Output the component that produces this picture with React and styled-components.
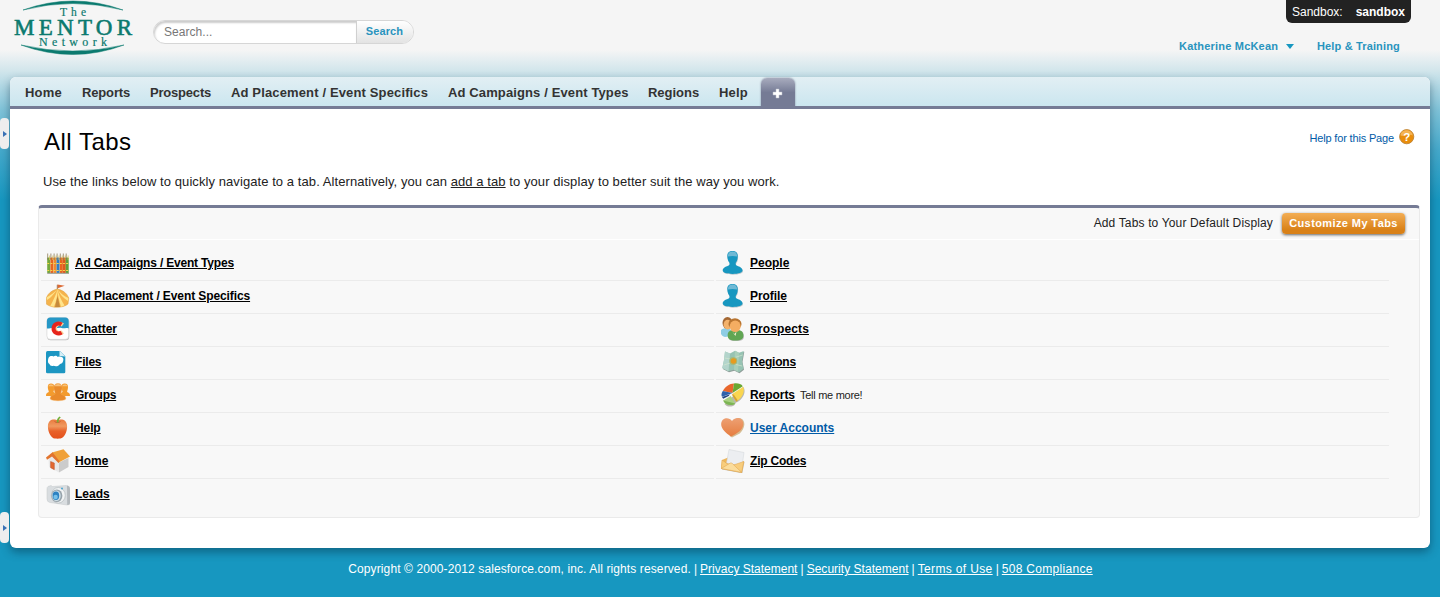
import React from "react";
import styled, { createGlobalStyle } from "styled-components";

const Global = createGlobalStyle`
  * { box-sizing: border-box; }
  body { margin: 0; font-family: "Liberation Sans", Arial, sans-serif; font-size: 12px; color: #222; background: #1797c0; }
  a { color: inherit; }
`;

const Page = styled.div`
  position: relative;
  height: 597px;
  overflow: hidden;
  background: linear-gradient(#f5f5f5 0, #f5f5f5 50px, #d3e6ec 70px, #7fc3d9 110px, #45a9cb 150px, #1797c0 200px);
`;

const Header = styled.header`
  display: flex;
  height: 77px;
  padding: 0 30px 0 11px;
`;

const Logo = styled.svg`
  width: 124px;
  height: 58px;
  flex: none;
`;

const SearchForm = styled.div`
  display: flex;
  width: 261px;
  height: 24px;
  margin: 20px 0 0 18px;
  border: 1px solid #d6d6d6;
  border-radius: 12px;
  overflow: hidden;
  background: #fff;
`;

const SearchField = styled.div`
  width: 202px;
  padding-left: 10px;
  line-height: 22px;
  color: #777;
  letter-spacing: 0.05px;
  border-radius: 12px 0 0 12px;
  box-shadow: inset 1px 2px 2px #ccc;
`;

const SearchButton = styled.button`
  flex: 1;
  padding: 0 1px 2px 0;
  border: 0;
  border-left: 1px solid #d0d0d0;
  font: bold 11px "Liberation Sans", Arial, sans-serif;
  letter-spacing: 0.1px;
  color: #2a94be;
  background: linear-gradient(#fff, #e3e3e3);
`;

const Account = styled.div`
  display: flex;
  margin: 39px 0 0 auto;
  line-height: 14px;
  font-size: 11px;
  font-weight: bold;
  color: #2a94be;
`;

const UserName = styled.span`
  width: 99px;
  letter-spacing: 0.2px;
  white-space: nowrap;
`;

const HelpLink = styled.span`
  width: 93px;
  margin-left: 23px;
  white-space: nowrap;
  letter-spacing: 0.15px;
`;

const Caret = styled.span`
  margin: 5px 0 0 8px;
  height: 0;
  border: 4px solid transparent;
  border-top: 5px solid #1797c0;
  border-bottom: 0;
`;

const SandboxBadge = styled.div`
  position: absolute;
  top: 0;
  right: 29px;
  display: flex;
  justify-content: space-between;
  width: 125px;
  height: 23px;
  padding: 0 6px;
  line-height: 24px;
  color: #fff;
  background: #222;
  border-radius: 0 0 6px 6px;
`;

const Sheet = styled.div`
  height: 471px;
  margin: 0 10px;
  background: #fff;
  border-radius: 6px;
  box-shadow: 0 4px 10px 0 rgba(0, 30, 50, 0.42);
`;

const TabBar = styled.nav`
  display: flex;
  height: 32px;
  padding: 0 5px;
  border-bottom: 3px solid #757b95;
  border-radius: 6px 6px 0 0;
  background: linear-gradient(#e2eff4, #cbe6ef);
`;

const Tab = styled.span`
  width: ${(p) => p.$w}px;
  padding-left: 10px;
  line-height: 31px;
  font-size: 13px;
  font-weight: bold;
  color: #333;
  white-space: nowrap;
  letter-spacing: ${(p) => p.$track}px;
`;

const PlusTab = styled.span`
  display: flex;
  justify-content: center;
  width: 34px;
  height: 29px;
  margin: 1px 0 0 -2px;
  padding: 10px 1px 0 0;
  border-radius: 6px 6px 0 0;
  background: linear-gradient(#a8acbe, #757b95 50%);
  box-shadow: 0 0 2px #777e95;
`;

const Content = styled.main`
  padding: 0 10px 0 28px;
`;

const TitleRow = styled.div`
  display: flex;
  justify-content: space-between;
  height: 57px;
  padding: 17px 5px 0 6px;
`;

const Title = styled.h1`
  margin: 0;
  font-size: 24px;
  line-height: 32px;
  font-weight: normal;
  letter-spacing: 0.5px;
  color: #000;
`;

const PageHelp = styled.div`
  display: flex;
  height: 24px;
  gap: 5px;
  font-size: 11px;
  line-height: 25px;
  letter-spacing: -0.16px;
  color: #015ba7;
`;

const Intro = styled.p`
  margin: 0;
  height: 39px;
  padding-left: 5px;
  font-size: 13px;
  line-height: 31px;
  letter-spacing: 0.075px;
`;

const Block = styled.section`
  height: 313px;
  border: 1px solid #eaeaea;
  border-top: 3px solid #757b95;
  border-radius: 4px;
  background: #f8f8f8;
`;

const BlockHeader = styled.div`
  display: flex;
  justify-content: flex-end;
  height: 32px;
  padding: 5px 14px 0 0;
  border-bottom: 1px solid #fff;
  line-height: 20px;
  letter-spacing: 0.15px;
`;

const CustomizeButton = styled.button`
  width: 123px;
  height: 21px;
  margin-left: 9px;
  padding: 0 0 1px;
  border: 0;
  border-radius: 4px;
  color: #fff;
  font: bold 11px "Liberation Sans", Arial, sans-serif;
  letter-spacing: 0.4px;
  white-space: nowrap;
  background: linear-gradient(#f3ae55, #d98118 80%);
  box-shadow: 0 1px 3px rgba(0, 0, 0, 0.6);
`;

const Lists = styled.div`
  display: grid;
  grid-template-columns: 673px 673px;
  column-gap: 2px;
  padding: 8px 0 0 2px;
`;

const Row = styled.div`
  display: flex;
  height: 33px;
  padding: 3px 0 0 5px;
  border-bottom: 1px solid ${(p) => (p.$last ? "transparent" : "#ebebeb")};
  line-height: 24px;
`;

const TabLink = styled.a`
  margin-left: 5px;
  font-weight: bold;
  color: ${(p) => (p.$blue ? "#015ba7" : "#000")};
  letter-spacing: ${(p) => p.$track}px;
  text-decoration: underline;
`;

const Note = styled.span`
  margin-left: 5px;
  font-size: 11px;
  line-height: 25px;
  letter-spacing: -0.28px;
`;

const Icon = styled.svg`
  width: 24px;
  height: 24px;
  flex: none;
`;

const Handle = styled.span`
  position: absolute;
  left: 0;
  top: ${(p) => p.$top}px;
  width: 9px;
  height: 31px;
  padding: 13px 0 0 3px;
  border-radius: 4px;
  background: #eee;
  &::after {
    content: "";
    display: block;
    width: 0;
    border: 3px solid transparent;
    border-left: 4px solid #3971b5;
    border-right: 0;
  }
`;

const Footer = styled.footer`
  padding: 14px 0 0 1px;
  text-align: center;
  line-height: 14px;
  color: #fff;
  word-spacing: -0.3px;
`;

const FooterText = styled.span`
  letter-spacing: ${(p) => p.$track}px;
  word-spacing: 0;
  text-decoration: ${(p) => (p.$link ? "underline" : "none")};
`;

const personPath = "M6.300 5C6.300 1.500 8 0 11.500 0s5.200 1.500 5.200 5c0 3-.5 4.600-1.500 6-.8 1.200-.8 2.800.3 3.500 1.500 1 6 1.600 6 5 0 2-4 3.400-9.900 3.400S1.700 21.500 1.700 19.500c0-3.400 4.500-4 6-5 1.100-.7 1.100-2.300.3-3.500-1-1.400-1.700-3-1.700-6z";

const Person = () => (
  <g>
    <path d={personPath} fill="#b9c6cb" transform="translate(.4 .8)" />
    <path d={personPath} fill="#1797c0" />
    <path d="M6.900 5.500c0-3.500 1.500-5 4.600-5s4.600 1.500 4.600 5c-2.500-.8-6.500-.8-9.200 0z" fill="#6fb9d5" />
  </g>
);

const icons = {
  books: (
    <g>
      <path d="M1 21h22v2H2z" fill="#c9c9c9" />
      {[["#74a83c", 1.2], ["#e8641e", 4.4], ["#f08a2c", 7.6], ["#2f7fc6", 10.600], ["#e8641e", 13.800], ["#e05a1c", 16.800], ["#5fa13b", 19.700]].map(([c, x]) => (
        <g key={x}>
          <rect x={x} y="6.500" width="3" height="15.500" rx=".8" fill={c} />
          <path d={`M${x + 0.5} 9v-6.500`} stroke="#8d7c58" strokeWidth=".8" />
          <path d={`M${x + 2.4} 9v-4.500`} stroke="#d8c15a" strokeWidth=".8" />
        </g>
      ))}
      <path d="M1.200 12.500h21.500M1.200 19.500h21.500" stroke="#f6d34a" strokeWidth="1" strokeDasharray="2 1.150" />
      <path d="M1 22.300h22" stroke="#8f8f80" strokeWidth=".7" />
    </g>
  ),
  tent: (
    <g>
      <path d="M11.300 6V.8" stroke="#8a6a4a" strokeWidth=".9" />
      <path d="M11.500.5l7.200 1.300-7 2.400z" fill="#dc6a35" />
      <path d="M11.500 5c4 .8 7.500 3 9.300 5.500l2 3.500-.8 6c-5 4.300-16 4.500-21.500.2L.200 14l2-3.500C4 8 7.500 5.800 11.500 5z" fill="#f5b34c" stroke="#dda040" strokeWidth=".5" />
      <path d="M11.500 5c.2 6-1 12-3.500 17.700l-3.700-.8C7.500 16 10.500 10 11.500 5zM11.500 5c.8 5 3.500 11 7 16.500l-3.500 1.200C13 17 11.800 11 11.500 5zM11.500 5C8.500 9 5 14 1 16l-.5-2.500C5 11 9 8 11.500 5zm0 0c2.500 4 6 7 10.800 9l-.2 3C17 14 13.500 10 11.500 5z" fill="#ffe48c" />
      <path d="M11.500 12l2.500 11h-5z" fill="#c58a3d" />
    </g>
  ),
  chatter: (
    <g>
      <rect x="1.200" y="1.200" width="22" height="22" rx="3.500" fill="#bcbcbc" />
      <rect x=".9" y=".5" width="21.800" height="21.900" rx="3.500" fill="#fff" stroke="#c9c9c9" strokeWidth=".5" />
      <path d="M.9 11.500V4C.9 1.800 2.200.600 4.300.600h15C21.500.600 22.700 1.800 22.700 4v7.500c-3-1.200-4.500.5-7-.5s-5 1-7.500 0-4 .7-7.300.5z" fill="#2597c6" />
      <path d="M16.800 8Q14 5.900 11.300 7.400C8 9.200 8 13.800 11.300 15.600Q14 17.100 16.800 15" fill="none" stroke="#f8d29b" strokeWidth="4" />
      <path d="M15.500 7.500Q12.700 5.600 10 7.200C6.700 9.100 6.700 13.900 10 15.800Q12.700 17.400 15.500 15.500" fill="none" stroke="#e7251c" strokeWidth="4" />
    </g>
  ),
  files: (
    <g>
      <path d="M0 2.500Q0 1 1.500 1H14l5.300 5.300V22q0 1.300-1.500 1.300H1.500Q0 23.300 0 22z" fill="#1c96c2" />
      <path d="M13.500.500l5.800 6-5.800-.5z" fill="#d5eef6" />
      <path d="M2.500 8c1-2.200 3.200-2.200 5-1.500 2-1.300 3.500-.3 4.300.5 2-1 5.500-.3 5.600 2.300-.1 2.700-1 4.300-3.400 4.700-1.500 2.500-4.300 2.700-6.500 1.800-2 .7-3.700-.3-4-1.800C1.500 13 1.800 10 2.500 8z" fill="#fff" />
    </g>
  ),
  groups: (
    <g fill="#f39b2d">
      <path d="M1.800 4C1.800 1.500 3 .500 5 .500S8.500 1.500 8.500 4c0 2.500-1 3.500-1 5 1 1 3 1 3 2v2H0c0-2.500.5-3 2.800-4 0-1.500-1-2.500-1-5z" />
      <path d="M15.500 4c0-2.500 1-3.500 3.200-3.500s3.300 1 3.300 3.500-.9 3.500-.9 5C23.500 10 24 10.500 24 13H13.500v-2c0-1 2-1 3-2 0-1.500-1-2.500-1-5z" />
      <path d="M7.900 5C7.900 2 9.300.500 12 .500S16.100 2 16.100 5c0 2.500-1.300 4-1.300 6 2 1.500 5 1 5 5-2 2.300-13.600 2.300-15.600 0 0-4 3-3.500 5-5 0-2-1.300-3.500-1.300-6z" fill="#e98b2c" stroke="#f4ab52" strokeWidth=".4" />
      <path d="M2.300 3.300C2.800.9 7.300.9 7.800 3.300zM16.200 3.300c.3-2.400 5-2.400 5.300 0zM8.800 3.300c.5-3 6-3 6.500 0z" fill="#f8c078" />
    </g>
  ),
  apple: (
    <g>
      <linearGradient id="apple" x1="0" y1="0" x2="0" y2="1">
        <stop offset="0" stopColor="#e97a3e" /><stop offset=".35" stopColor="#f09a60" /><stop offset=".6" stopColor="#e8622a" /><stop offset="1" stopColor="#e4501b" />
      </linearGradient>
      <path d="M11.500 4.500C9 2.800 1.900 2.500 1.900 10.500c0 6 3.300 11.500 6.800 12.100 2 .2 3.800.2 5.800 0 3.500-.5 6.600-6 6.600-12 0-8-7-8-9.600-6.100z" fill="url(#apple)" />
      <path d="M8.500 5.500c1.500 1.300 4.500 1.300 6 0" stroke="#c3502a" strokeWidth=".8" fill="none" />
      <path d="M10.800 6.500c0-3 .5-4.500 2.800-6l1.200 1C12.900 3 12.500 4 12.500 6.500z" fill="#72ae35" />
    </g>
  ),
  home: (
    <g>
      <path d="M2.500 10L7 5l6 8.500v10.100L3 18z" fill="#e9e9e9" />
      <path d="M13 13.500l9.500-4.500v9L13 23.600z" fill="#cbcbcb" />
      <path d="M4.600 12.500L8.300 14v6.700l-3.700-2z" fill="#e36831" stroke="#b9512c" strokeWidth=".5" />
      <path d="M6 3.500L17.500.3 24 7.500l-11.700 6.200z" fill="#f0a139" />
      <path d="M6.500 3.200L0 8.500l1 2.200 5-3.200 6.500 6.400 1-1.600z" fill="#e2742d" />
    </g>
  ),
  camera: (
    <g>
      <path d="M2 4.500l3-1 1.500 1L20 3.500q3.500 0 4 3V21q0 2-3 2L4 20.500Q1 20 1 17V7q0-2 1-2.500z" fill="#d9dde0" stroke="#c4c8cb" strokeWidth=".5" />
      <path d="M21 3.600q2.700.4 3 3V21q-.1 1.800-2.800 2z" fill="#b4b9bd" />
      <ellipse cx="12.300" cy="13.300" rx="7" ry="7.800" fill="#f1f3f4" stroke="#b5bbbf" strokeWidth=".7" />
      <ellipse cx="10.900" cy="13.700" rx="5.500" ry="6.300" fill="#97a3ab" />
      <ellipse cx="10.400" cy="13.700" rx="4.300" ry="5.200" fill="#cfe0e9" />
      <ellipse cx="9.900" cy="13.700" rx="3.300" ry="4.200" fill="#2d82c2" />
      <ellipse cx="9.600" cy="15" rx="2.200" ry="2.200" fill="#77c1ea" />
      <circle cx="16" cy="6.500" r="1" fill="#48a5d2" />
    </g>
  ),
  person: <Person />,
  prospects: (
    <g>
      <path d="M0 13c2-2.500 8-2.500 10 0l1 6-7 1q-5-1-4-7z" fill="#8ecde4" />
      <path d="M7.500 15c2.500-3 11.500-3 14 0 1.500 3 1 5.500-.5 7-3.500 2-10 2-13 0-1.500-2-2-4.500-.5-7z" fill="#bdbdbd" transform="translate(.6 .8)" />
      <path d="M7.500 15c2.500-3 11.500-3 14 0 1.500 3 1 5.500-.5 7-3.500 2-10 2-13 0-1.500-2-2-4.500-.5-7z" fill="#61a653" />
      <ellipse cx="6.500" cy="6" rx="5" ry="6" fill="#a36733" />
      <ellipse cx="6.600" cy="7.600" rx="4" ry="4.800" fill="#f3b26b" />
      <ellipse cx="14" cy="7" rx="6.500" ry="5.800" fill="#b87430" />
      <ellipse cx="14.200" cy="9.300" rx="5.500" ry="5.800" fill="#f4ad62" />
      <path d="M11.500 15l2 2 2-2.500-1 4.500z" fill="#f7f0d0" />
    </g>
  ),
  map: (
    <g>
      <path d="M4 1.500l5 2L14 .8l4 2 4.800-1.900L21 11l1.500 7.800-4.500 3.500-5-2.500-5.500 1.500L1.300 18 3 10z" fill="#8f9e99" transform="translate(.5 .9)" />
      <path d="M4 1.500l5 2L14 .8l4 2 4.800-1.900L21 11l1.500 7.800-4.500 3.500-5-2.500-5.500 1.500L1.300 18 3 10z" fill="#97c3b3" />
      <path d="M4 1.500l5 2-1.500 17.800L1.300 18 3 10z" fill="#b3d4cb" />
      <path d="M14 .8l4 2-1 19-4-2z" fill="#a9cfba" />
      <path d="M3.500 8l6 1 12-4M3 15l6-2 12 3" stroke="#d2e5cf" fill="none" strokeWidth=".7" />
      <circle cx="12.300" cy="11" r="4" fill="#a3b97c" />
      <circle cx="12.500" cy="11" r="2.800" fill="#e79b1f" />
    </g>
  ),
  chart: (
    <g>
      <path d="M22 4c2 1 2.500 7-1 11-2 2.500-4 4-6 4.500l-1.500 2.500c-3 2.500-8 2-10-1z" fill="#b9b7ae" />
      <path d="M1.800 8C4 3.500 8.500.7 13 .5L11.500 10z" fill="#e9672d" />
      <path d="M13 .5c4-.5 7 .5 8.800 2.700L11.500 10z" fill="#6aa832" />
      <path d="M1.800 8l9.700 2L1 13.800C0 12 .5 10 1.800 8z" fill="#2e61ac" />
      <path d="M1 14l8-2.800-1.300 1.700-5.500 2.800z" fill="#1f4382" />
      <path d="M22.300 3.700c1.500 5-.5 10-5.500 13.800L12 10.500z" fill="#fad650" />
      <path d="M12 10.500l4.800 7-1.500 1.200-4.300-7z" fill="#dba624" />
      <path d="M9.700 13l4.500 7.500c-3.500 2.800-10 1.700-12-3z" fill="#a9d083" />
      <path d="M2.200 17.500l12 3c-3.500 2.800-10 1.700-12-3z" fill="#7cb553" />
    </g>
  ),
  heart: (
    <g>
      <linearGradient id="heart" x1="0" y1="0" x2="0" y2="1"><stop offset="0" stopColor="#eda073" /><stop offset="1" stopColor="#e67d40" /></linearGradient>
      <path d="M12 5.200C16-.5 24 1.500 23.300 9c-.2 3-2.500 6.500-4.500 8.500L11 21.500l-1.500-1z" fill="#d6bd93" />
      <path d="M11 5C15 0 22.500 1.700 22.300 8.200 22 14 16 17.500 9.800 20.500 4.500 16.500-.3 12.500.2 7.500.8 1.500 8 .500 11 5z" fill="url(#heart)" />
    </g>
  ),
  mail: (
    <g>
      <path d="M1.500 12L23.500 13 21.300 24.300 1 20.500z" fill="#c9c2b3" />
      <path d="M1 11l6-2.500 16 4-2.300 11L.3 19.500z" fill="#eeb75c" />
      <path d="M8 .5l15 3-2 14L5.500 14z" fill="#eceef1" stroke="#d0d4d8" strokeWidth=".5" />
      <path d="M1 11l8.500 6L22.800 12.500l-2.100 10.900L.3 19.500z" fill="#f8cd7c" stroke="#dfa34c" strokeWidth=".5" />
      <path d="M.3 19.500l9-5.500c1-.3 2 .2 2.500 1l8.900 8.400z" fill="#fbdc9b" stroke="#dfa34c" strokeWidth=".5" />
    </g>
  ),
};

const tabs = [
  ["Home", 57, 0.2], ["Reports", 68, -0.15], ["Prospects", 81, -0.2], ["Ad Placement / Event Specifics", 217, 0.14],
  ["Ad Campaigns / Event Types", 200, 0.12], ["Regions", 71, -0.02], ["Help", 54, 0.2],
];

const left = [
  ["Ad Campaigns / Event Types", "books", -0.19], ["Ad Placement / Event Specifics", "tent", -0.1], ["Chatter", "chatter", 0],
  ["Files", "files", -0.2], ["Groups", "groups", -0.25], ["Help", "apple", -0.1], ["Home", "home", 0], ["Leads", "camera", 0],
];

const right = [
  ["People", "person", 0], ["Profile", "person", -0.05], ["Prospects", "prospects", 0.1], ["Regions", "map", -0.2],
  ["Reports", "chart", -0.05, "Tell me more!"], ["User Accounts", "heart", 0], ["Zip Codes", "mail", -0.2],
];

const TabList = ({ items, open }) => (
  <div>
    {items.map(([name, icon, track, note], i) => (
      <Row key={name} $last={!open && i === items.length - 1}>
        <Icon viewBox="0 0 24 24">{icons[icon]}</Icon>
        <TabLink $track={track} $blue={name === "User Accounts"}>{name}</TabLink>
        {note && <Note>{note}</Note>}
      </Row>
    ))}
  </div>
);

export default function App() {
  return (
    <Page>
      <Global />
      <Header>
        <Logo viewBox="0 0 124 58" fill="#0b7a6f" fontFamily="Liberation Serif, serif">
          <path d="M12 10Q62-8 112 10Q62-3 12 10zM10 45Q62 64 113 45Q62 57 10 45z" stroke="#0b7a6f" strokeWidth=".5" />
          <text x="49" y="15.500" fontSize="11.500" textLength="26" stroke="#0b7a6f" strokeWidth=".2">The</text>
          <text x="3" y="34.500" fontSize="23" textLength="118" stroke="#0b7a6f" strokeWidth=".6">MENTOR</text>
          <text x="28" y="46" fontSize="12" textLength="68" stroke="#0b7a6f" strokeWidth=".2">Network</text>
        </Logo>
        <SearchForm>
          <SearchField>Search...</SearchField>
          <SearchButton>Search</SearchButton>
        </SearchForm>
        <Account>
          <UserName>Katherine McKean</UserName>
          <Caret />
          <HelpLink>{"Help & Training"}</HelpLink>
        </Account>
      </Header>
      <SandboxBadge><span>Sandbox:</span><b>sandbox</b></SandboxBadge>
      <Sheet>
        <TabBar>
          {tabs.map(([name, w, track]) => <Tab key={name} $w={w} $track={track}>{name}</Tab>)}
          <PlusTab>
            <svg width="11" height="11" viewBox="0 0 11 11"><path d="M4 1h3v3h3v3H7v3H4V7H1V4h3z" fill="#fff" stroke="#b8bccb" strokeWidth=".5" /></svg>
          </PlusTab>
        </TabBar>
        <Content>
          <TitleRow>
            <Title>All Tabs</Title>
            <PageHelp>
              <span>Help for this Page</span>
              <svg width="16" height="24" viewBox="0 0 16 24">
                <circle cx="7.700" cy="10.700" r="7.100" fill="#e98d0b" stroke="#b87b2b" strokeWidth=".8" />
                <path d="M1.500 9.500C2 2.500 13 2.500 13.800 9.500 9 7.500 6 11 1.500 9.500z" fill="#f5b352" />
                <text x="4.300" y="15" fontSize="11.500" fontWeight="bold" fill="#fff">?</text>
              </svg>
            </PageHelp>
          </TitleRow>
          <Intro>
            Use the links below to quickly navigate to a tab. Alternatively, you can <u>add a tab</u> to your display to better suit the way you work.
          </Intro>
          <Block>
            <BlockHeader>
              <span>Add Tabs to Your Default Display</span>
              <CustomizeButton>Customize My Tabs</CustomizeButton>
            </BlockHeader>
            <Lists>
              <TabList items={left} />
              <TabList items={right} open />
            </Lists>
          </Block>
        </Content>
      </Sheet>
      <Handle $top={118} />
      <Handle $top={512} />
      <Footer>
        <FooterText $track={0.11}>Copyright © 2000-2012 salesforce.com, inc. All rights reserved.</FooterText>
        {" | "}<FooterText $link $track={0}>Privacy Statement</FooterText>
        {" | "}<FooterText $link $track={0.03}>Security Statement</FooterText>
        {" | "}<FooterText $link $track={0.35}>Terms of Use</FooterText>
        {" | "}<FooterText $link $track={0.3}>508 Compliance</FooterText>
      </Footer>
    </Page>
  );
}
